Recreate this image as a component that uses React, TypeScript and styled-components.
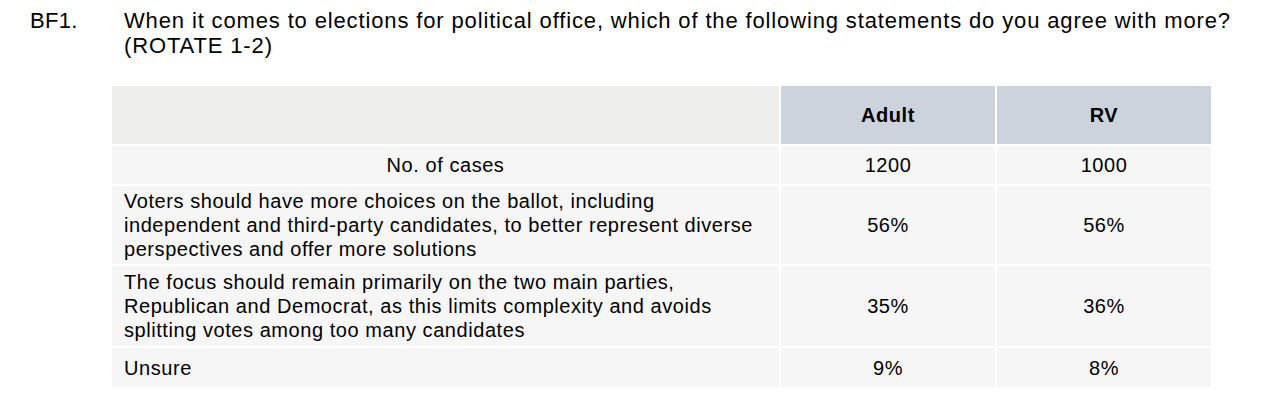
import React from 'react';
import styled, { createGlobalStyle } from 'styled-components';

const GlobalStyle = createGlobalStyle`
  html, body {
    margin: 0;
    padding: 0;
    background: #ffffff;
  }

  body {
    font-family: 'Liberation Sans', Arial, Helvetica, sans-serif;
    color: #000000;
  }
`;

const Page = styled.div`
  width: 1264px;
  height: 408px;
  box-sizing: border-box;
  padding-top: 8px;
`;

const Question = styled.div`
  display: flex;
  font-size: 22px;
  line-height: 25px;
  letter-spacing: 0.86px;
`;

const QuestionId = styled.div`
  flex: 0 0 124px;
  padding-left: 30px;
  box-sizing: border-box;
  letter-spacing: 0.3px;
`;

const QuestionText = styled.div`
  flex: 1;
  white-space: nowrap;
`;

const Table = styled.div`
  display: grid;
  grid-template-columns: 667px 214px 214px;
  grid-template-rows: 58px 38px 78px 80px 39px;
  gap: 2px;
  margin: 28px 0 0 112px;
  width: 1099px;
  font-size: 20px;
  line-height: 24px;
  letter-spacing: 0.56px;
`;

const Cell = styled.div<{ $kind?: 'blank' | 'head' | 'body'; $align?: 'left' | 'center' }>`
  display: flex;
  align-items: center;
  justify-content: ${(p) => (p.$align === 'left' ? 'flex-start' : 'center')};
  text-align: ${(p) => (p.$align === 'left' ? 'left' : 'center')};
  padding: 0 12px;
  white-space: nowrap;
  background: ${(p) =>
    p.$kind === 'blank' ? '#eeeeec' : p.$kind === 'head' ? '#ccd3dd' : '#f6f6f6'};
  font-weight: ${(p) => (p.$kind === 'head' ? 700 : 400)};
`;

const rows = [
  {
    label: 'No. of cases',
    center: true,
    adult: '1200',
    rv: '1000',
  },
  {
    label: (
      <>
        Voters should have more choices on the ballot, including
        <br />
        independent and third-party candidates, to better represent diverse
        <br />
        perspectives and offer more solutions
      </>
    ),
    adult: '56%',
    rv: '56%',
  },
  {
    label: (
      <>
        The focus should remain primarily on the two main parties,
        <br />
        Republican and Democrat, as this limits complexity and avoids
        <br />
        splitting votes among too many candidates
      </>
    ),
    adult: '35%',
    rv: '36%',
  },
  {
    label: 'Unsure',
    adult: '9%',
    rv: '8%',
  },
];

const App: React.FC = () => {
  return (
    <>
      <GlobalStyle />
      <Page>
        <Question>
          <QuestionId>BF1.</QuestionId>
          <QuestionText>
            When it comes to elections for political office, which of the following statements do
            you agree with more?
            <br />
            (ROTATE 1-2)
          </QuestionText>
        </Question>
        <Table>
          <Cell $kind='blank' />
          <Cell $kind='head'>Adult</Cell>
          <Cell $kind='head'>RV</Cell>
          {rows.map((row, i) => (
            <React.Fragment key={i}>
              <Cell $kind='body' $align={row.center ? 'center' : 'left'}>
                <div>{row.label}</div>
              </Cell>
              <Cell $kind='body'>{row.adult}</Cell>
              <Cell $kind='body'>{row.rv}</Cell>
            </React.Fragment>
          ))}
        </Table>
      </Page>
    </>
  );
};

export default App;
